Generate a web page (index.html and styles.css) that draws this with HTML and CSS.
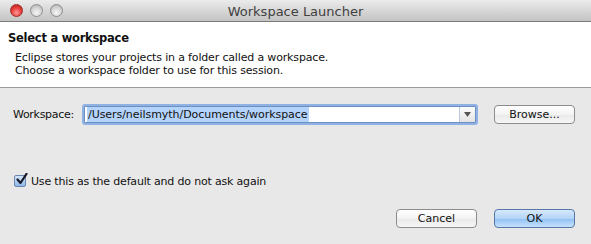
FILE: index.html
```html
<!DOCTYPE html>
<html>
<head>
<meta charset="utf-8">
<link rel="stylesheet" href="styles.css">
</head>
<body>
<div class="window">
  <div class="titlebar">
    <div class="lights">
      <span class="light red"></span>
      <span class="light gray"></span>
      <span class="light gray"></span>
    </div>
    <div class="title">Workspace Launcher</div>
  </div>
  <div class="header">
    <div class="heading">Select a workspace</div>
    <div class="desc">Eclipse stores your projects in a folder called a workspace.<br>Choose a workspace folder to use for this session.</div>
  </div>
  <div class="main">
    <div class="ws-row">
      <span class="label">Workspace:</span>
      <div class="combo">
        <div class="combo-text"><span class="sel">/Users/neilsmyth/Documents/workspace</span></div>
        <div class="combo-btn"><svg width="7" height="5" viewBox="0 0 7 5"><path d="M0 0H7L3.5 5Z" fill="#555"/></svg></div>
      </div>
      <button class="btn">Browse...</button>
    </div>
    <label class="check-row">
      <span class="checkbox"><svg width="13" height="13" viewBox="0 0 13 13"><path d="M2.5 6.5 L5.5 10 L11.5 0.8" fill="none" stroke="#1a1a2a" stroke-width="2.2" stroke-linecap="round" stroke-linejoin="round"/></svg></span>
      <span class="check-text">Use this as the default and do not ask again</span>
    </label>
    <div class="actions">
      <button class="btn">Cancel</button>
      <button class="btn primary">OK</button>
    </div>
  </div>
</div>
</body>
</html>
```
FILE: styles.css
```css
html, body {
  margin: 0;
  padding: 0;
}
body {
  width: 591px;
  height: 244px;
  overflow: hidden;
  font-family: "DejaVu Sans", sans-serif;
  font-size: 11px;
  color: #111;
}
.window {
  width: 591px;
  height: 244px;
  background: #e8e8e8;
  display: flex;
  flex-direction: column;
}
.titlebar {
  height: 22px;
  box-sizing: border-box;
  background: linear-gradient(#ebebeb, #d3d3d3 60%, #c4c4c4);
  border-bottom: 1px solid #7b7b7b;
  position: relative;
  display: flex;
  align-items: center;
  justify-content: center;
}
.lights {
  position: absolute;
  left: 10px;
  top: 4px;
  display: flex;
  gap: 7px;
}
.light {
  width: 13px;
  height: 13px;
  border-radius: 50%;
  box-sizing: border-box;
}
.light.red {
  background: radial-gradient(circle at 50% 70%, #f99 0%, #e6403c 50%, #b81e1a 100%);
  border: 1px solid #9e2a25;
}
.light.gray {
  background: radial-gradient(circle at 50% 70%, #f6f6f6 0%, #d6d6d6 50%, #a8a8a8 100%);
  border: 1px solid #8d8d8d;
}
.title {
  font-size: 13px;
  color: #404040;
  padding-top: 1px;
}
.header {
  height: 66px;
  box-sizing: border-box;
  background: #fff;
  border-bottom: 1px solid #9a9a9a;
  padding: 9px 0 0 8px;
}
.heading {
  font-weight: bold;
  font-size: 11.5px;
  letter-spacing: -0.25px;
  line-height: 15px;
}
.desc {
  margin-top: 5px;
  padding-left: 7px;
  line-height: 13px;
  letter-spacing: -0.16px;
}
.main {
  flex: 1;
  padding: 16px 16px 0 13px;
  display: flex;
  flex-direction: column;
}
.ws-row {
  display: flex;
  align-items: center;
  height: 21px;
}
.label {
  width: 69px;
  letter-spacing: -0.3px;
}
.combo {
  width: 396px;
  height: 21px;
  box-sizing: border-box;
  border: 2px solid #8fb2e2;
  border-radius: 3px;
  background: #fff;
  display: flex;
  box-shadow: inset 0 0 0 1px #6e8fc4;
}
.combo-text {
  flex: 1;
  display: flex;
  align-items: center;
  padding-left: 3px;
}
.sel {
  background: #b4d3fb;
  line-height: 15px;
  padding: 0 1px;
  letter-spacing: -0.05px;
}
.combo-btn {
  width: 15px;
  border-left: 1px solid #b9c9df;
  background: linear-gradient(#fcfcfc, #e3e3e3);
  display: flex;
  align-items: center;
  justify-content: center;
  margin: 1px 1px 1px 0;
}
.btn {
  font-family: "DejaVu Sans", sans-serif;
  font-size: 11px;
  color: #111;
  width: 81px;
  height: 19px;
  box-sizing: border-box;
  border: 1px solid #8c8c8c;
  border-radius: 4px;
  background: linear-gradient(#ffffff, #f3f3f3 50%, #e9e9e9 51%, #f6f6f6);
  padding: 0;
}
.ws-row .btn {
  margin-left: 16px;
}
.btn.primary {
  border-color: #5677a8;
  background: linear-gradient(#d7e9fc, #b3d4f7 50%, #8ec0f4 51%, #c7e2fc);
}
.check-row {
  display: flex;
  align-items: center;
  margin-top: 49px;
  margin-left: 1px;
  gap: 5px;
  height: 14px;
}
.check-text {
  letter-spacing: -0.18px;
}
.checkbox {
  width: 12px;
  height: 12px;
  box-sizing: border-box;
  border: 1px solid #6d86b0;
  border-radius: 2px;
  background: linear-gradient(#d4e6fb, #8db9ea);
  position: relative;
}
.checkbox svg {
  position: absolute;
  left: 0;
  top: -3px;
}
.actions {
  display: flex;
  justify-content: flex-end;
  gap: 17px;
  margin-top: 21px;
}
```
